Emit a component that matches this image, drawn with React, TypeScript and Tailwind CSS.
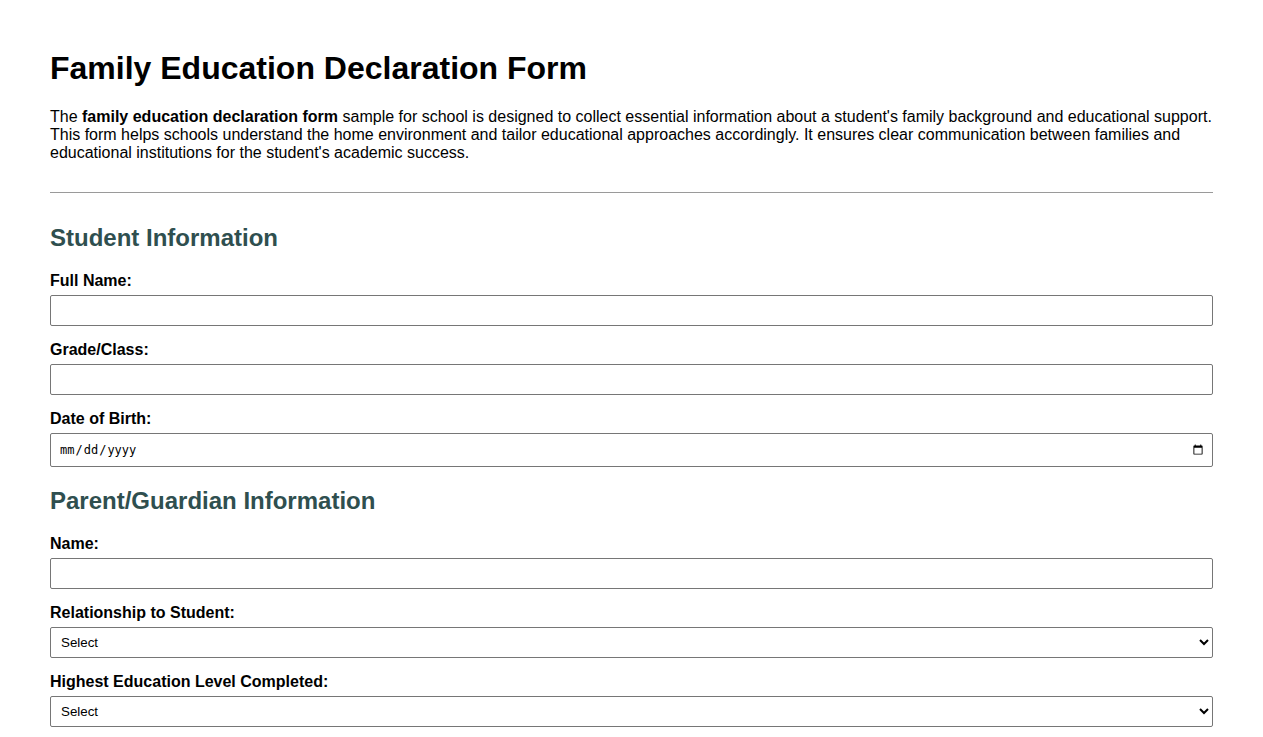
import React from "react";

const inputCls =
  "block w-full h-[31px] border border-[#767676] rounded-[2px] bg-white px-[7px] text-[13.33px] text-black outline-none";

function Field({ label, children }: { label: string; children: React.ReactNode }) {
  return (
    <div className="mb-[15px]">
      <label className="block font-bold text-[16px] leading-[18px] mb-[5px]">{label}</label>
      {children}
    </div>
  );
}

export default function App() {
  return (
    <div
      className="bg-white text-black min-h-screen px-[50px] pt-[50px] pb-[40px]"
      style={{ fontFamily: '"Liberation Sans", Arial, sans-serif' }}
    >
      <h1 className="text-[32px] font-bold leading-[37px] m-0">Family Education Declaration Form</h1>
      <p className="text-[16px] leading-[18px] mt-[21px]">
        The <strong>family education declaration form</strong> sample for school is designed to collect essential
        information about a student's family background and educational support. This form helps schools understand
        the home environment and tailor educational approaches accordingly. It ensures clear communication between
        families and educational institutions for the student's academic success.
      </p>
      <hr className="mt-[30px] mb-[31px] border-0 border-t border-[#9a9a9a]" />
      <h2 className="text-[24px] font-bold leading-[27.6px] text-[#2f4f4f] mb-[20px]">Student Information</h2>
      <Field label="Full Name:">
        <input type="text" className={inputCls} />
      </Field>
      <Field label="Grade/Class:">
        <input type="text" className={inputCls} />
      </Field>
      <Field label="Date of Birth:">
        <input
          type="date"
          className="block w-full h-[34px] border border-[#767676] rounded-[2px] bg-white pl-[8px] pr-[6px] text-black outline-none"
          style={{ fontFamily: '"DejaVu Sans Mono", "Liberation Mono", monospace', fontSize: "12px" }}
        />
      </Field>
      <h2 className="text-[24px] font-bold leading-[27.6px] text-[#2f4f4f] mt-[20px] mb-[21px]">
        Parent/Guardian Information
      </h2>
      <Field label="Name:">
        <input type="text" className={inputCls} />
      </Field>
      <Field label="Relationship to Student:">
        <select className="block w-full h-[31px] border border-[#767676] rounded-[2px] bg-white pl-[6px] text-[13.33px] text-black outline-none">
          <option>Select</option>
          <option>Mother</option>
          <option>Father</option>
          <option>Guardian</option>
        </select>
      </Field>
      <Field label="Highest Education Level Completed:">
        <select className="block w-full h-[31px] border border-[#767676] rounded-[2px] bg-white pl-[6px] text-[13.33px] text-black outline-none">
          <option>Select</option>
          <option>High School</option>
          <option>Bachelor's Degree</option>
          <option>Master's Degree</option>
        </select>
      </Field>
    </div>
  );
}
